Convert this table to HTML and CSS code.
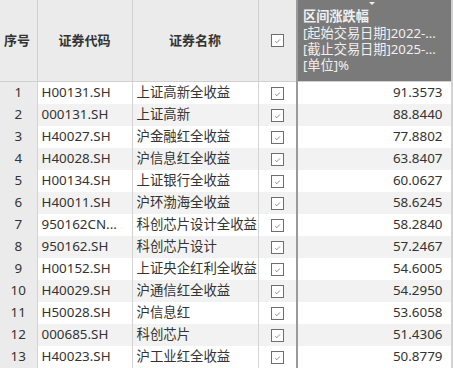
FILE: index.html
```html
<!DOCTYPE html>
<html>
<head>
<meta charset="utf-8">
<link rel="stylesheet" href="styles.css">
</head>
<body>
<div class="wrap">
<table class="grid">
<colgroup>
<col class="c1"><col class="c2"><col class="c3"><col class="c4"><col class="c5">
</colgroup>
<thead>
<tr>
<th class="h-idx">序号</th>
<th class="h-c">证券代码</th>
<th class="h-c">证券名称</th>
<th class="h-chk"><span class="cb"><svg viewBox="0 0 12 12" width="12" height="12"><path d="M3.5 6.2 L5.3 7.9 L8.6 4.3" fill="none" stroke="#777" stroke-width="0.9"/></svg></span></th>
<th class="h-dark"><span class="tri"></span><div class="t1">区间涨跌幅</div><div>[起始交易日期]2022-...</div><div>[截止交易日期]2025-...</div><div>[单位]%</div></th>
</tr>
</thead>
<tbody>
<tr><td class="idx">1</td><td>H00131.SH</td><td>上证高新全收益</td><td class="chk"><span class="cb"><svg viewBox="0 0 12 12" width="12" height="12"><path d="M3.5 6.2 L5.3 7.9 L8.6 4.3" fill="none" stroke="#777" stroke-width="0.9"/></svg></span></td><td class="num">91.3573</td></tr>
<tr><td class="idx">2</td><td>000131.SH</td><td>上证高新</td><td class="chk"><span class="cb"><svg viewBox="0 0 12 12" width="12" height="12"><path d="M3.5 6.2 L5.3 7.9 L8.6 4.3" fill="none" stroke="#777" stroke-width="0.9"/></svg></span></td><td class="num">88.8440</td></tr>
<tr><td class="idx">3</td><td>H40027.SH</td><td>沪金融红全收益</td><td class="chk"><span class="cb"><svg viewBox="0 0 12 12" width="12" height="12"><path d="M3.5 6.2 L5.3 7.9 L8.6 4.3" fill="none" stroke="#777" stroke-width="0.9"/></svg></span></td><td class="num">77.8802</td></tr>
<tr><td class="idx">4</td><td>H40028.SH</td><td>沪信息红全收益</td><td class="chk"><span class="cb"><svg viewBox="0 0 12 12" width="12" height="12"><path d="M3.5 6.2 L5.3 7.9 L8.6 4.3" fill="none" stroke="#777" stroke-width="0.9"/></svg></span></td><td class="num">63.8407</td></tr>
<tr><td class="idx">5</td><td>H00134.SH</td><td>上证银行全收益</td><td class="chk"><span class="cb"><svg viewBox="0 0 12 12" width="12" height="12"><path d="M3.5 6.2 L5.3 7.9 L8.6 4.3" fill="none" stroke="#777" stroke-width="0.9"/></svg></span></td><td class="num">60.0627</td></tr>
<tr><td class="idx">6</td><td>H40011.SH</td><td>沪环渤海全收益</td><td class="chk"><span class="cb"><svg viewBox="0 0 12 12" width="12" height="12"><path d="M3.5 6.2 L5.3 7.9 L8.6 4.3" fill="none" stroke="#777" stroke-width="0.9"/></svg></span></td><td class="num">58.6245</td></tr>
<tr><td class="idx">7</td><td>950162CN...</td><td>科创芯片设计全收益</td><td class="chk"><span class="cb"><svg viewBox="0 0 12 12" width="12" height="12"><path d="M3.5 6.2 L5.3 7.9 L8.6 4.3" fill="none" stroke="#777" stroke-width="0.9"/></svg></span></td><td class="num">58.2840</td></tr>
<tr><td class="idx">8</td><td>950162.SH</td><td>科创芯片设计</td><td class="chk"><span class="cb"><svg viewBox="0 0 12 12" width="12" height="12"><path d="M3.5 6.2 L5.3 7.9 L8.6 4.3" fill="none" stroke="#777" stroke-width="0.9"/></svg></span></td><td class="num">57.2467</td></tr>
<tr><td class="idx">9</td><td>H00152.SH</td><td>上证央企红利全收益</td><td class="chk"><span class="cb"><svg viewBox="0 0 12 12" width="12" height="12"><path d="M3.5 6.2 L5.3 7.9 L8.6 4.3" fill="none" stroke="#777" stroke-width="0.9"/></svg></span></td><td class="num">54.6005</td></tr>
<tr><td class="idx">10</td><td>H40029.SH</td><td>沪通信红全收益</td><td class="chk"><span class="cb"><svg viewBox="0 0 12 12" width="12" height="12"><path d="M3.5 6.2 L5.3 7.9 L8.6 4.3" fill="none" stroke="#777" stroke-width="0.9"/></svg></span></td><td class="num">54.2950</td></tr>
<tr><td class="idx">11</td><td>H50028.SH</td><td>沪信息红</td><td class="chk"><span class="cb"><svg viewBox="0 0 12 12" width="12" height="12"><path d="M3.5 6.2 L5.3 7.9 L8.6 4.3" fill="none" stroke="#777" stroke-width="0.9"/></svg></span></td><td class="num">53.6058</td></tr>
<tr><td class="idx">12</td><td>000685.SH</td><td>科创芯片</td><td class="chk"><span class="cb"><svg viewBox="0 0 12 12" width="12" height="12"><path d="M3.5 6.2 L5.3 7.9 L8.6 4.3" fill="none" stroke="#777" stroke-width="0.9"/></svg></span></td><td class="num">51.4306</td></tr>
<tr><td class="idx">13</td><td>H40023.SH</td><td>沪工业红全收益</td><td class="chk"><span class="cb"><svg viewBox="0 0 12 12" width="12" height="12"><path d="M3.5 6.2 L5.3 7.9 L8.6 4.3" fill="none" stroke="#777" stroke-width="0.9"/></svg></span></td><td class="num">50.8779</td></tr>
</tbody>
</table>
<div class="strip"></div>
</div>
</body>
</html>
```
FILE: styles.css
```css
html, body {
  margin: 0;
  padding: 0;
  background: #ffffff;
}
.wrap {
  display: flex;
  width: 453px;
  height: 368px;
  overflow: hidden;
}
.grid {
  border-collapse: collapse;
  table-layout: fixed;
  width: 451px;
  font-family: "Noto Sans", "Noto Sans CJK SC", sans-serif;
  font-size: 13.4px;
  color: #333333;
}
.strip {
  width: 2px;
  flex: none;
  background: #e6e6e6;
  border-left: 1px solid #d0d0d0;
}
.c1 { width: 37px; }
.c2 { width: 95px; }
.c3 { width: 126px; }
.c4 { width: 39px; }
.c5 { width: 154px; }
thead th {
  height: 77px;
  padding: 0 0 3px 0;
  background: #ebebeb;
  border-right: 1px solid #d0d0d0;
  border-bottom: 1px solid #d0d0d0;
  font-family: "Noto Sans CJK SC", sans-serif;
  font-size: 13px;
  font-weight: bold;
  color: #333333;
  vertical-align: middle;
}
.h-idx { text-align: left; padding-left: 4px; }
.h-c { text-align: center; }
.h-chk { text-align: center; border-right: 2px solid #9a9a9a; }
.h-dark {
  position: relative;
  background: #7a7a7a;
  color: #f0f0f0;
  text-align: left;
  vertical-align: top;
  padding: 4px 0 0 5px;
  white-space: nowrap;
}
.h-dark div {
  font-family: "Noto Sans", "Noto Sans CJK SC", sans-serif;
  font-weight: normal;
  font-size: 13.2px;
  line-height: 16px;
}
.h-dark .t1 {
  font-family: "Noto Sans CJK SC", sans-serif;
  font-weight: bold;
  line-height: 19px;
  margin-top: 2px;
}
.tri {
  position: absolute;
  top: 2px;
  left: 71px;
  width: 0;
  height: 0;
  border-left: 3px solid transparent;
  border-right: 3px solid transparent;
  border-top: 3px solid #f0f0f0;
}
tbody td {
  height: 20px;
  padding: 0 4px 2px 4px;
  border-right: 1px solid #d4d4d4;
  white-space: nowrap;
  overflow: hidden;
  line-height: 20px;
}
tbody tr:nth-child(even) td { background: #f2f2f2; }
tbody td.idx {
  background: #ebebeb;
  text-align: center;
  padding: 0 0 2px 0;
}
tbody tr:nth-child(even) td.idx { background: #ebebeb; }
tbody td.chk {
  text-align: center;
  padding: 0 0 1px 0;
  border-right: 2px solid #9a9a9a;
}
tbody td.num {
  text-align: right;
  padding-right: 8px;
}
.cb {
  display: inline-flex;
  width: 11px;
  height: 11px;
  border: 1px solid #6e6e6e;
  background: #ffffff;
  vertical-align: middle;
  align-items: center;
  justify-content: center;
}
.cb svg { display: block; }
```
